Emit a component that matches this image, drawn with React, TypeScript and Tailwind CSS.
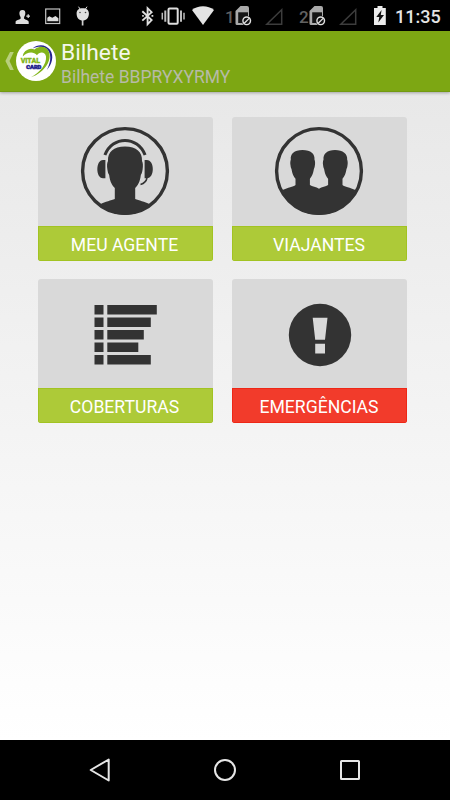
import React from 'react';

const PersonAddIcon = () => (
  <svg className="ml-[15px] h-[31px] w-4 shrink-0" viewBox="0 0 16 31" fill="#dedede">
    <path d="M7.500 10c2.400 0 3 1.600 2.800 3.600-.1 1.800-.9 2.800-1.200 3.500v1.600c1.200 1 4.600 1.400 4.600 3.200V24H.6v-2.100c0-1.800 3.700-2.200 5-3.200v-1.600c-.4-.7-1.100-1.700-1.200-3.500C4.300 11.600 5.100 10 7.500 10z" />
    <path d="M12.600 14.300h1.200v1.300H15v1.200h-1.200V18h-1.200v-1.200h-1.300v-1.200h1.300z" />
  </svg>
);

const ImageIcon = () => (
  <svg className="ml-[14px] h-[31px] w-4 shrink-0" viewBox="0 0 16 31">
    <rect x="0.700" y="9" width="14" height="14.500" fill="none" stroke="#c4c4c4" strokeWidth="1.200" />
    <path d="M2.300 21.200v-3.400l2-1.500 3 1.500 3.200-1.800 2.900 2.200v3z" fill="#dedede" />
  </svg>
);

const AndroidIcon = () => (
  <svg className="ml-[14px] h-[31px] w-4 shrink-0" viewBox="0 0 16 31">
    <path d="M3.500 6.700l2 3M12 6.700l-2 3" stroke="#dedede" strokeWidth="1" />
    <path d="M1.600 13.500C1.600 10 4 8.200 7.700 8.200s6.200 1.800 6.200 5.300c0 4.500-2.600 7-6.200 7s-6.100-2.500-6.100-7z" fill="#dedede" />
    <path d="M7.600 20v5.500" stroke="#cfcfcf" strokeWidth="1.700" />
    <circle cx="5" cy="12.500" r="0.800" fill="#444" />
    <circle cx="10.500" cy="12.500" r="0.800" fill="#444" />
  </svg>
);

const BluetoothIcon = () => (
  <svg className="h-[31px] w-[14px] shrink-0" viewBox="0 0 14 31" fill="none" stroke="#dedede" strokeWidth="1.900">
    <path d="M1.300 11.300l9.300 8.800-4 4V8.200l4 4-9.300 8.400" />
    <path d="M1.200 15.900h1.600M10.500 15.900h1.800" strokeWidth="1.800" />
  </svg>
);

const VibrateIcon = () => (
  <svg className="ml-[6px] h-[31px] w-6 shrink-0" viewBox="0 0 24 31" fill="none">
    <rect x="7.500" y="8.500" width="9.200" height="15.200" rx="1" stroke="#dedede" strokeWidth="2" />
    <path d="M4.300 10.500v11.300M20 10.500v11.300" stroke="#bdbdbd" strokeWidth="2" />
    <path d="M1.300 12.800v6.700M23 12.800v6.700" stroke="#bdbdbd" strokeWidth="1.500" />
  </svg>
);

const WifiIcon = () => (
  <svg className="ml-[7px] h-[31px] w-[22px] shrink-0" viewBox="0 0 22 31">
    <path d="M0 10c6-5 16-5 22 0L11 25z" fill="#e4e4e4" />
  </svg>
);

const SimSlot = ({ slot, className }: { slot: string; className: string }) => (
  <div className={`flex h-[31px] shrink-0 items-center ${className}`}>
    <span className="w-[10px] shrink-0 pt-[4px] text-[17px] font-medium leading-none text-[#626262]">{slot}</span>
    <svg className="h-[31px] w-[18px] shrink-0" viewBox="0 0 18 31">
      <path d="M5.500 6H12a2 2 0 0 1 2 2v17H2a1.500 1.500 0 0 1-1.500-1.500V11z" fill="#aaa" />
      <path d="M3.200 12.300H13V23H3.200z" fill="#151515" />
      <circle cx="11.700" cy="20.800" r="5" fill="#111" />
      <circle cx="11.700" cy="20.800" r="3.800" fill="none" stroke="#e2e2e2" strokeWidth="1.400" />
      <path d="M9 23.500l5.400-5.400" stroke="#e2e2e2" strokeWidth="1.300" />
    </svg>
  </div>
);

const SignalIcon = ({ className }: { className: string }) => (
  <svg className={`h-[31px] w-[18px] shrink-0 ${className}`} viewBox="0 0 18 31">
    <path d="M1.800 24.200L16.700 9.700v14.500z" fill="none" stroke="#3d3d3d" strokeWidth="1.500" />
  </svg>
);

const BatteryIcon = () => (
  <svg className="ml-[17px] h-[31px] w-[13px] shrink-0" viewBox="0 0 13 31">
    <path d="M3.500 6h5v2h3.300v17H0V8h3.500z" fill="#ececec" />
    <path d="M7.600 10L2.300 17h3l-1 5.500L10 15h-3.200z" fill="#111" />
  </svg>
);

const Logo = () => (
  <svg className="ml-[1px] h-[42px] w-[42px] shrink-0" viewBox="0 0 42 42">
    <circle cx="21" cy="21" r="20" fill="#fff" />
    <path d="M17.500 8.500C23 3.500 31 4.300 35 9.800c4.500 6.500 1.800 14.800-3.200 20.200C35.500 23 36.500 16 33.500 11 30.500 6.300 24 5.700 17.500 8.500z" fill="#23238e" />
    <path d="M7.800 16.500C8 11.500 14 7 19.500 9.500c4.500-4 11.500-3.500 14 1.500 4.200 8.500-3.500 21.500-17.500 26.300C25 32.500 31.800 24 31 16.500c-.6-4.700-6.300-5.500-9-1.300C18.500 11 12 11.800 7.800 16.500z" fill="#83b51b" />
    <text x="5.700" y="23.200" textLength="19.300" lengthAdjust="spacingAndGlyphs" fontFamily="Roboto, sans-serif" fontWeight="900" fontSize="6.500" fill="#83b51b" stroke="#83b51b" strokeWidth="0.300">VITAL</text>
    <text x="11.300" y="29.200" textLength="15" lengthAdjust="spacingAndGlyphs" fontFamily="Roboto, sans-serif" fontWeight="900" fontSize="4.700" fill="#23238e" stroke="#23238e" strokeWidth="0.500">CARD</text>
  </svg>
);

const AgentIcon = () => (
  <svg className="mb-[2px] h-[90px] w-[90px]" viewBox="0 0 90 90" fill="#333">
    <circle cx="45" cy="45" r="42.400" fill="none" stroke="#333" strokeWidth="3.400" />
    <path d="M45 20.500c11.500 0 17.500 5.500 17 14.500.9 1.500 1.300 4.500.6 8.500-.3 2.300-.7 4-1.700 5.300-1 7.500-3.200 11-5.700 13.200v11c3.500 1.500 9.500 2.500 14.500 5.300C63.500 85 55 89 45 89s-18.500-4-24.700-10.700c5-2.800 11-3.800 14.500-5.300V62c-2.500-2.200-4.700-5.700-5.700-13.200-1-1.300-1.400-3-1.700-5.300-.7-4-.3-7 .6-8.500-.5-9 5.500-14.500 17-14.500z" />
    <path d="M24.900 29C32.500 9.500 57.500 9.500 65.100 29" fill="none" stroke="#333" strokeWidth="3" />
    <path d="M25.400 34v18.300H23c-7.500 0-7.500-18.300 0-18.300zM64.600 34v18.300h2.200c8 0 8-18.300 0-18.300z" />
    <path d="M67 52c-.7 3.500-3.500 5.500-6.500 6.500" fill="none" stroke="#333" strokeWidth="1.500" />
  </svg>
);

const TravelersIcon = () => (
  <svg className="mb-[2px] mr-[2px] h-[90px] w-[90px]" viewBox="0 0 90 90" fill="#333">
    <circle cx="45" cy="45" r="42.400" fill="none" stroke="#333" strokeWidth="3.400" />
    <path d="M28.500 24c8.500 0 12.500 3.800 12 9.700.6 1.300.8 3.300.4 5.600-.2 1.700-.6 2.800-1 3.600-.8 5.300-2.500 8-4 9.800V59c2.200 1.500 6.300 1.900 9.100 3.700 2.800-1.800 6.900-2.200 9.100-3.700v-6.300c-1.500-1.800-3.200-4.500-4-9.800-.4-.8-.8-1.900-1-3.600-.4-2.300-.2-4.300.4-5.600-.5-5.900 3.500-9.700 11.500-9.700s12.700 3.800 12.200 9.700c.5 1.300.7 3.300.3 5.600-.2 1.700-.5 2.800-1 3.600-.8 5.300-2.500 8-4 9.800V59c2.300 2 7.500 2.500 13 5C75.500 78 62 89 45 89S14.500 78 8.500 64c5.500-2.500 10.700-3 13-5v-6.300c-1.500-1.800-3.200-4.500-4-9.800-.5-.8-.8-1.900-1-3.600-.4-2.300-.2-4.300.3-5.600C16.300 27.800 20 24 28.500 24z" />
  </svg>
);

const CoverageIcon = () => (
  <svg className="ml-px mt-[3px] h-[62px] w-[64px]" viewBox="0 0 64 62" fill="#333">
    {[49.5, 43.5, 36.5, 31, 43.5].map((width, i) => (
      <g key={i}>
        <rect x="0.500" y={1 + i * 12.5} width="9" height="9.500" />
        <rect x="13.300" y={1 + i * 12.5} width={width} height="9.500" />
      </g>
    ))}
  </svg>
);

const EmergencyIcon = () => (
  <svg className="mt-[3px] h-[64px] w-[64px]" viewBox="0 0 64 64">
    <circle cx="32" cy="32" r="31.200" fill="#333" />
    <path d="M24.700 14.700h14.800l-2.500 22.100h-9.800zM27.200 40.800H37v9.700h-9.800z" fill="#d9d9d9" />
  </svg>
);

interface TileProps {
  label: string;
  icon: React.ReactNode;
  danger?: boolean;
}

const Tile: React.FC<TileProps> = ({ label, icon, danger }) => (
  <button className="flex h-[144px] w-[175px] flex-col overflow-hidden rounded-[3px] bg-[#d9d9d9]">
    <div className="flex h-[109px] w-full items-center justify-center">{icon}</div>
    <div
      className={`flex h-[35px] w-full items-center justify-center border text-[17.6px] leading-none text-white ${
        danger ? 'border-[#ee2716] bg-[#f23b2b]' : 'border-[#a2c322] bg-[#adca38]'
      }`}
    >
      <span className="pr-px pt-[4px]">{label}</span>
    </div>
  </button>
);

export default function App() {
  return (
    <div className="flex h-[800px] w-[450px] flex-col overflow-hidden bg-black font-['Roboto',sans-serif]">
      <div className="flex h-[31px] shrink-0 items-center bg-black">
        <PersonAddIcon />
        <ImageIcon />
        <AndroidIcon />
        <div className="ml-auto flex items-center">
          <BluetoothIcon />
          <VibrateIcon />
          <WifiIcon />
          <SimSlot slot="1" className="ml-[11px]" />
          <SignalIcon className="ml-[12px]" />
          <SimSlot slot="2" className="ml-[16px]" />
          <SignalIcon className="ml-[12px]" />
          <BatteryIcon />
          <span className="ml-[8px] mr-[9px] w-[46px] pt-[2px] text-[18px] font-medium leading-none text-[#e4e4e4]">11:35</span>
        </div>
      </div>

      <header className="z-10 flex h-[61px] shrink-0 items-center border-b border-[#729a10] bg-[#7da713] shadow-[0_1px_3px_rgba(0,0,0,0.3)]">
        <svg className="ml-[5px] h-5 w-[9px] shrink-0" viewBox="0 0 9 20">
          <path d="M5 1h3.800L4.500 10l4.300 9H5L.4 10z" fill="#b8cf7c" />
        </svg>
        <Logo />
        <div className="ml-[4px] pt-[6px]">
          <h1 className="text-[22.8px] leading-[26px] text-[#f4f7ec]">Bilhete</h1>
          <p className="text-[17.5px] leading-[22px] text-[#b7bba6]">Bilhete BBPRYXYRMY</p>
        </div>
      </header>

      <main className="flex-1 bg-linear-to-b from-[#e8e8e8] to-white pt-[25px]">
        <div className="ml-[37.5px] grid w-[370px] grid-cols-[175px_175px] gap-x-[19.5px] gap-y-[18px]">
          <Tile label="MEU AGENTE" icon={<AgentIcon />} />
          <Tile label="VIAJANTES" icon={<TravelersIcon />} />
          <Tile label="COBERTURAS" icon={<CoverageIcon />} />
          <Tile label="EMERGÊNCIAS" icon={<EmergencyIcon />} danger />
        </div>
      </main>

      <nav className="flex h-[60px] shrink-0 items-center justify-center gap-[101px] bg-black">
        <svg className="h-6 w-6" viewBox="0 0 24 24" fill="none" stroke="#e6e6e6" strokeWidth="2" strokeLinejoin="round">
          <path d="M20.700 1.500v21L2.700 12z" />
        </svg>
        <svg className="h-6 w-6" viewBox="0 0 24 24" fill="none" stroke="#e6e6e6" strokeWidth="2">
          <circle cx="12" cy="12" r="10" />
        </svg>
        <svg className="h-6 w-6" viewBox="0 0 24 24" fill="none" stroke="#e6e6e6" strokeWidth="2">
          <rect x="3" y="3" width="18" height="18" rx="0.500" />
        </svg>
      </nav>
    </div>
  );
}
